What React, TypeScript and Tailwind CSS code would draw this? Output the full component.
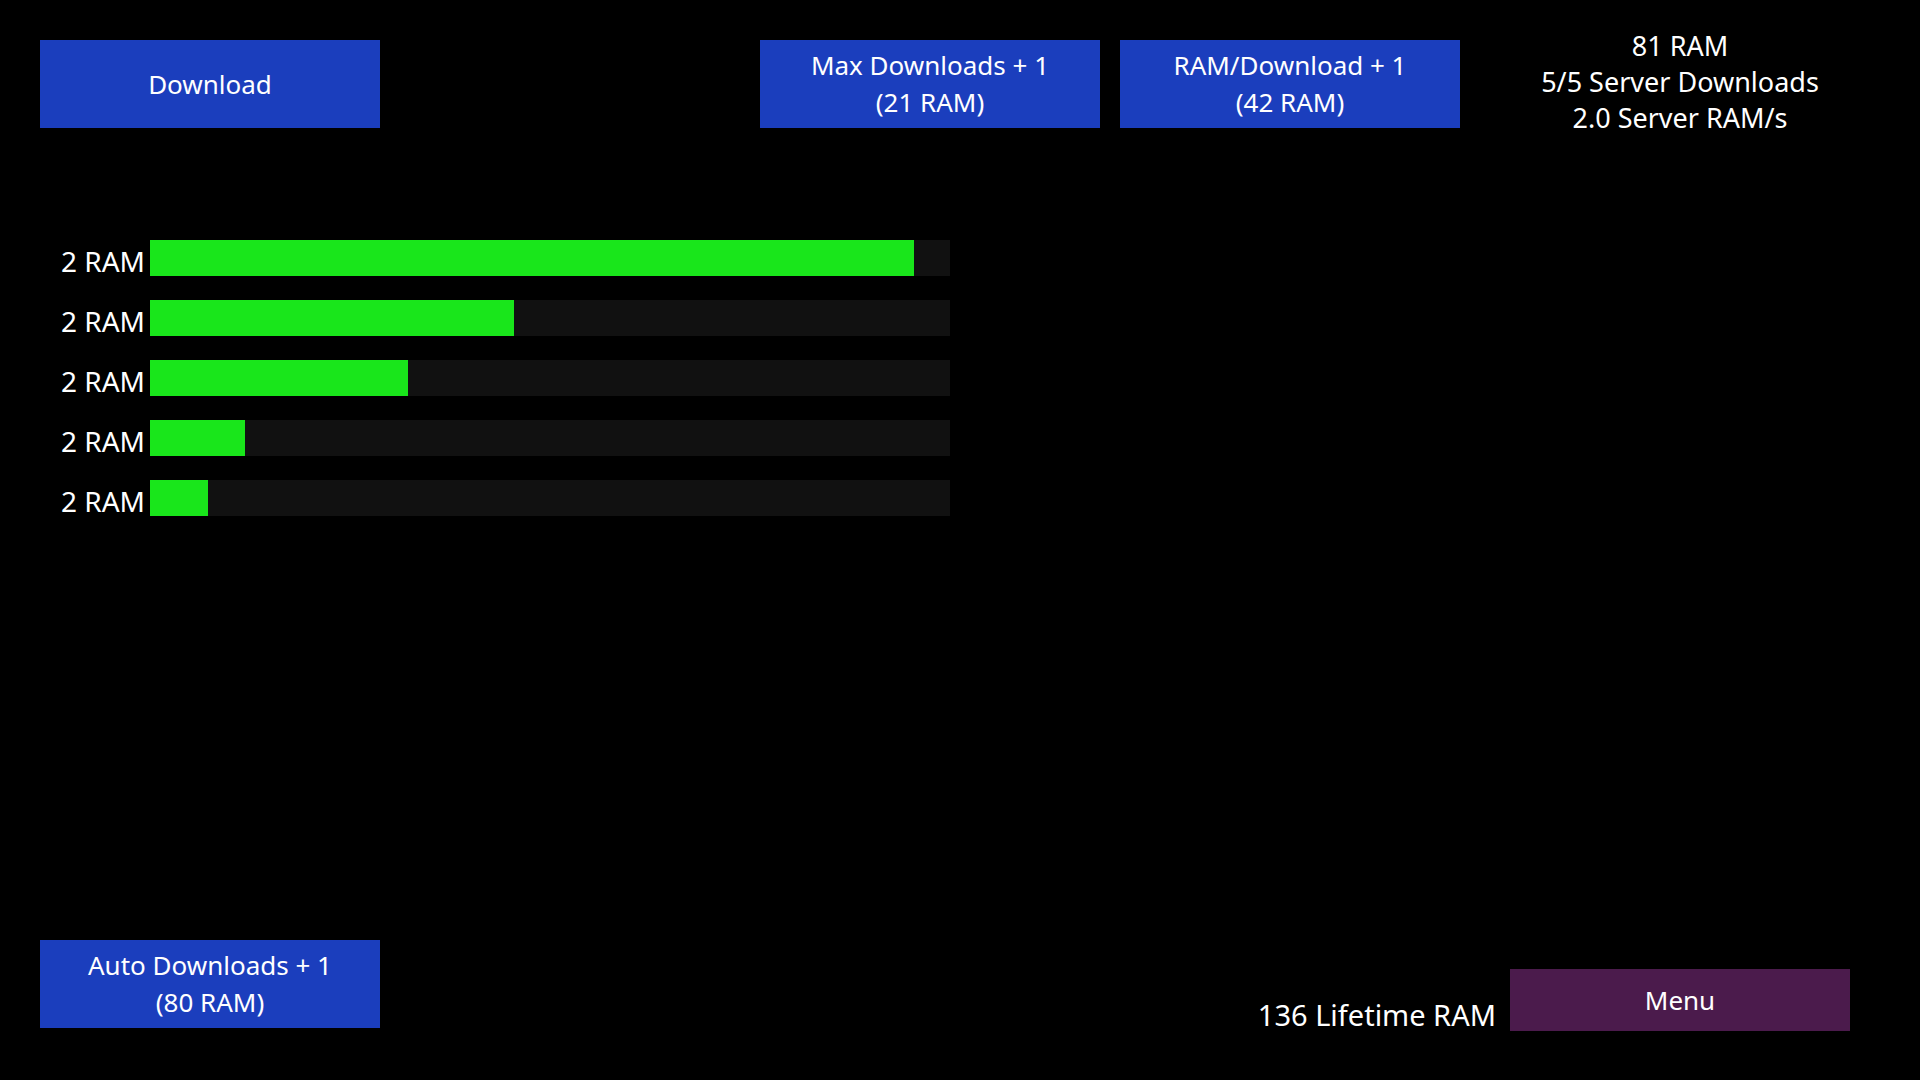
import React from "react"

const downloads = [95.5, 45.5, 32.25, 11.9, 7.25]

function BlueButton({ lines }: { lines: string[] }) {
  return (
    <button className="w-[340px] h-[88px] bg-[#1b3ebd] text-white text-[26px] leading-[37px] flex flex-col items-center justify-center">
      {lines.map((l) => (
        <span key={l}>{l}</span>
      ))}
    </button>
  )
}

export default function App() {
  return (
    <div
      className="h-screen w-full bg-black text-white flex flex-col overflow-hidden"
      style={{ fontFamily: '"Noto Sans", "Open Sans", sans-serif' }}
    >
      {/* top controls */}
      <div className="flex items-start pt-[40px] px-[40px]">
        <BlueButton lines={["Download"]} />
        <div className="ml-[380px]">
          <BlueButton lines={["Max Downloads + 1", "(21 RAM)"]} />
        </div>
        <div className="ml-[20px]">
          <BlueButton lines={["RAM/Download + 1", "(42 RAM)"]} />
        </div>
        <div className="ml-[50px] w-[340px] -mt-[12px] h-[88px] flex flex-col items-center text-[27px] leading-[36px]">
          <span>81 RAM</span>
          <span>5/5 Server Downloads</span>
          <span>2.0 Server RAM/s</span>
        </div>
      </div>

      {/* active downloads */}
      <div className="mt-[112px] px-[40px] flex flex-col gap-[24px]">
        {downloads.map((pct, i) => (
          <div key={i} className="flex items-end">
            <span className="w-[105px] text-right text-[28px] leading-none mb-[1px]">2 RAM</span>
            <div className="ml-[5px] w-[800px] h-[36px] bg-[#111111]">
              <div className="h-full bg-[#19e61b]" style={{ width: `${pct}%` }} />
            </div>
          </div>
        ))}
      </div>

      {/* bottom bar */}
      <div className="mt-auto flex items-end justify-between pl-[40px] pr-[70px]">
        <div className="mb-[52px]">
          <BlueButton lines={["Auto Downloads + 1", "(80 RAM)"]} />
        </div>
        <div className="flex items-end gap-[14px] mb-[49px]">
          <span className="text-[29px] leading-none mb-[2px]">136 Lifetime RAM</span>
          <button className="w-[340px] h-[62px] bg-[#4b1b4c] text-white text-[26px]">Menu</button>
        </div>
      </div>
    </div>
  )
}
